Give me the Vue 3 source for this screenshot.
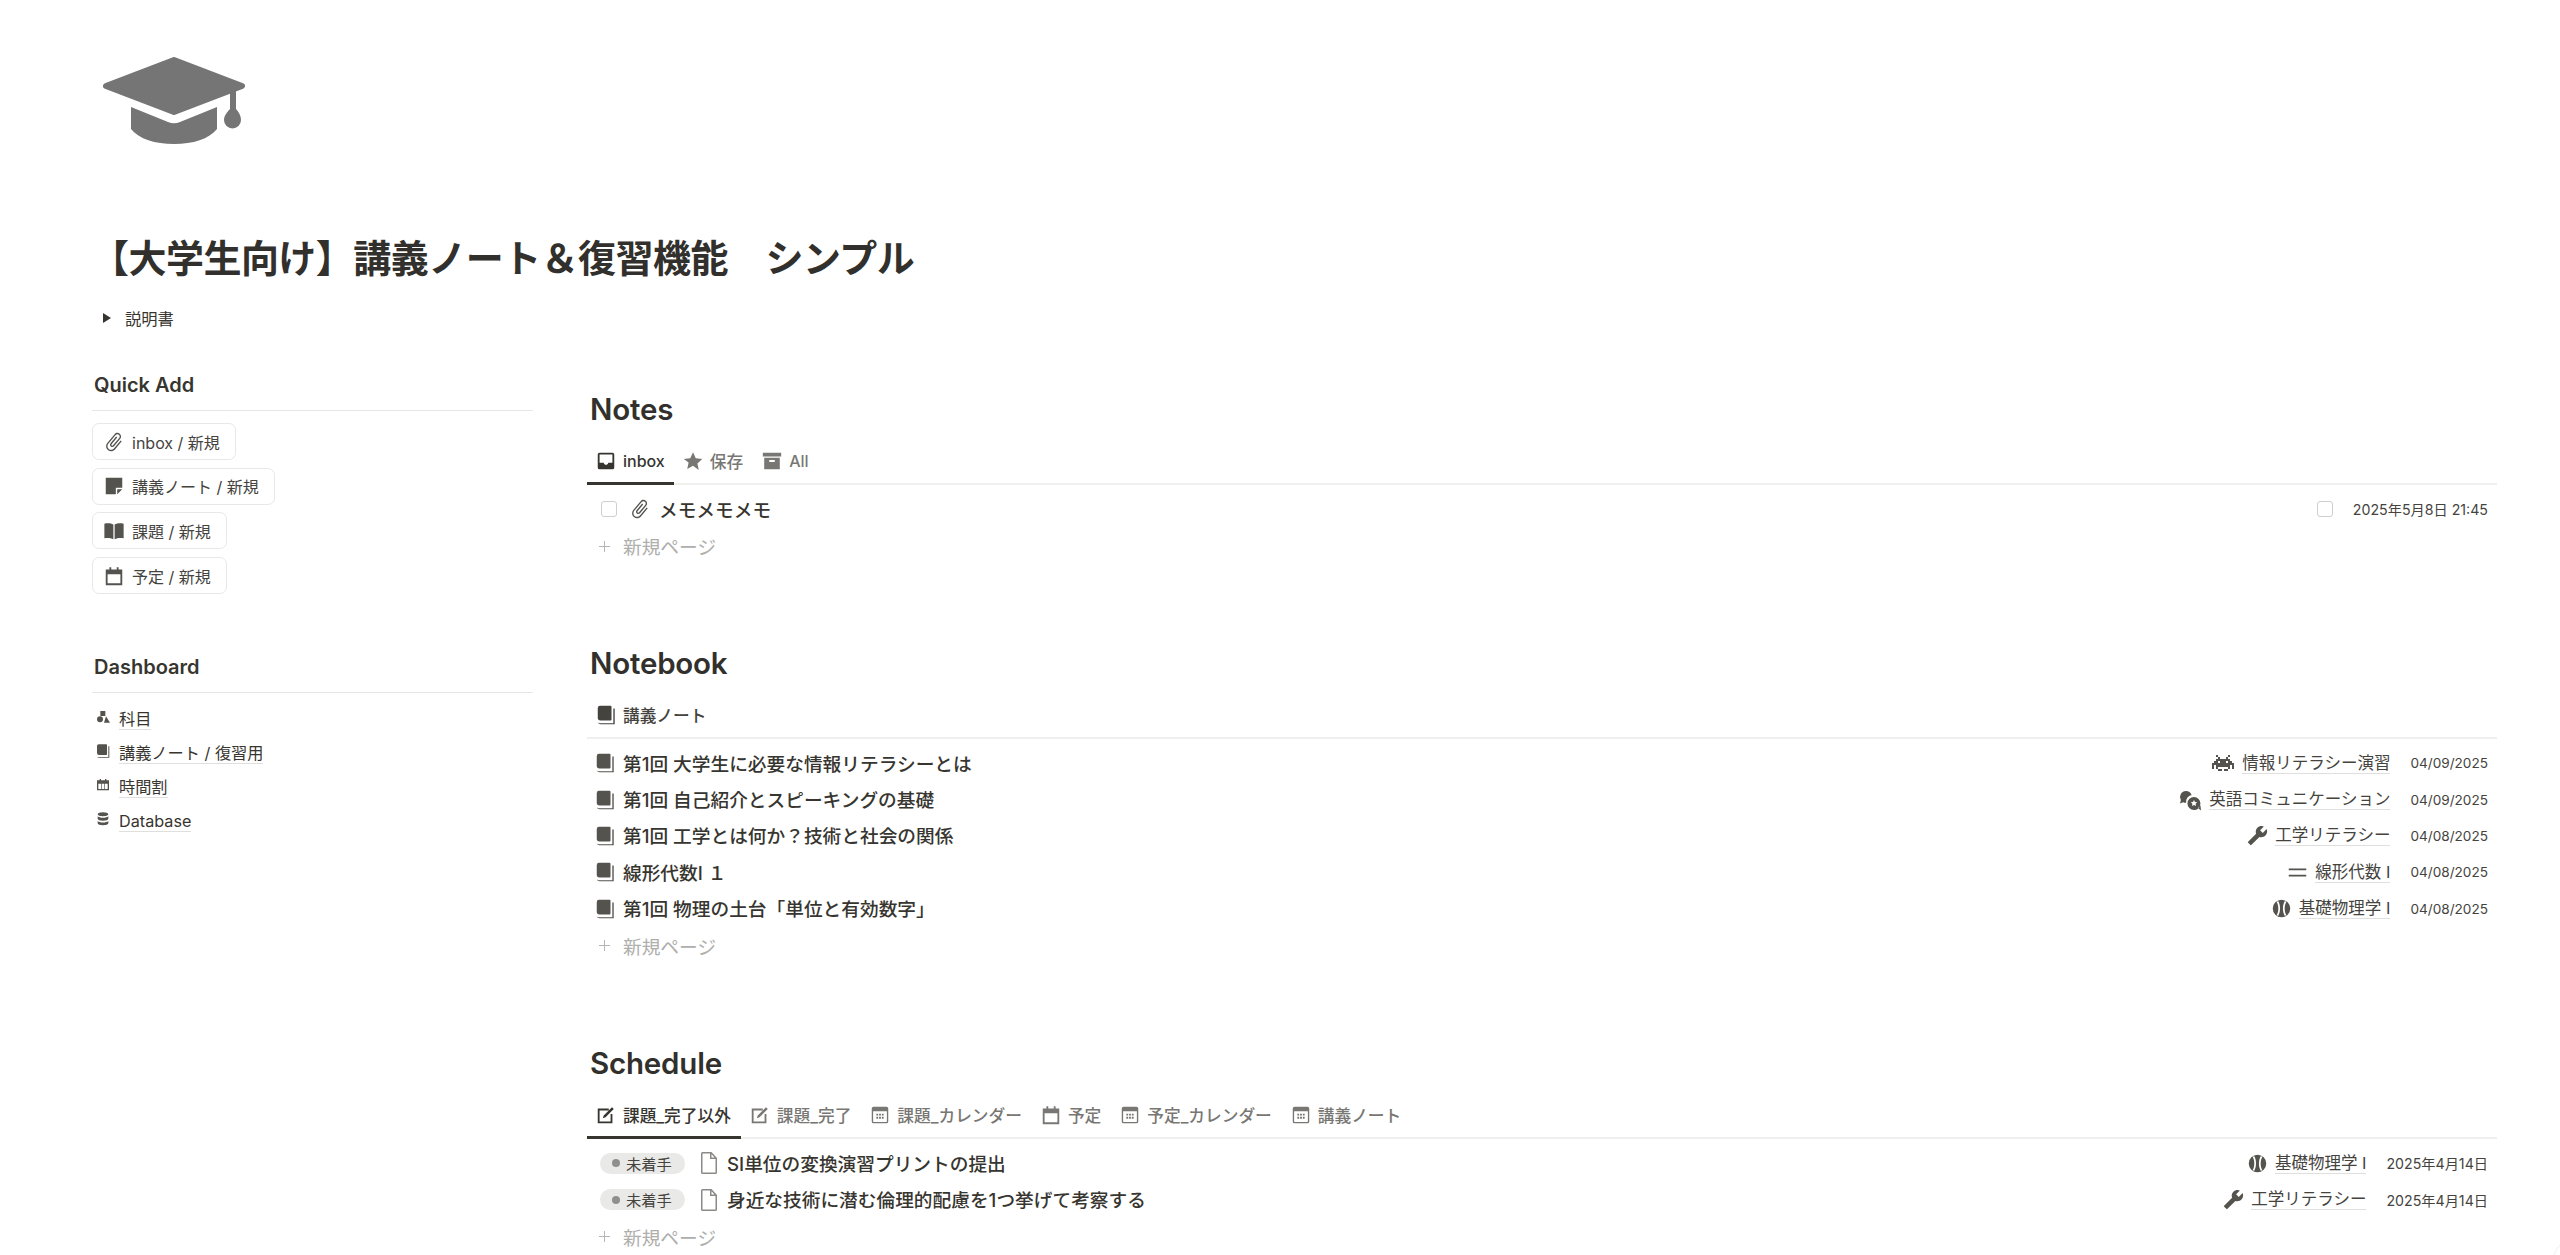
<script setup>
// pixel sprite for the little invader icon
const invader = [
  "..X.....X..",
  "...X...X...",
  "..XXXXXXX..",
  ".XX.XXX.XX.",
  "XXXXXXXXXXX",
  "X.XXXXXXX.X",
  "X.X.....X.X",
  "...XX.XX...",
]
  .flatMap((line, y) =>
    [...line].map((c, x) =>
      c === "X" ? `M${1 + x * 2} ${4 + y * 2}h2v2h-2z` : ""
    )
  )
  .join("");

const icons = {
  clip: "M16.5 6v11.5c0 2.21-1.79 4-4 4s-4-1.79-4-4V5c0-1.38 1.12-2.5 2.5-2.5s2.5 1.12 2.5 2.5v10.5c0 .55-.45 1-1 1s-1-.45-1-1V6H10v9.5c0 1.38 1.12 2.5 2.5 2.5s2.5-1.12 2.5-2.5V5c0-2.21-1.79-4-4-4S7 2.79 7 5v12.5c0 3.04 2.46 5.5 5.5 5.5s5.5-2.46 5.5-5.5V6h-1.5z",
  note: "M3 3h18v11h-7v7H3z M15.5 15.5H21L15.5 21z",
  book: "M1.5 4c3.2-.8 7-.8 9.8 1v16c-2.8-1.5-6.6-1.8-9.8-1z M22.5 4c-3.2-.8-7-.8-9.8 1v16c2.8-1.5 6.6-1.8 9.8-1z",
  cal: "M3 5h4V2.5h2V5h6V2.5h2V5h4v17H3z M5 10v10h14V10z",
  inbox: "M5 3h14a2 2 0 0 1 2 2v14a2 2 0 0 1-2 2H5a2 2 0 0 1-2-2V5a2 2 0 0 1 2-2z M5 5v9h4.5c.4 1.5 1.3 2.2 2.5 2.2s2.1-.7 2.5-2.2H19V5z",
  star: "M12 2.5l3 6.6 7.1.8-5.3 4.8 1.5 7L12 17.2l-6.3 3.5 1.5-7L1.9 9.9 9 9.1z",
  archive: "M2 3h20v4H2z M3.5 8.5h17V21h-17z M9 11v2h6v-2z",
  stack: "M3 4.5A2.5 2.5 0 0 1 5.5 2H17a1 1 0 0 1 1 1v14a1 1 0 0 1-1 1H6a3 3 0 0 1-3-3z M20 5h1.5v17H6a3.5 3.5 0 0 1-3-1.8c.8.5 1.6.8 3 .8h14z",
  shapes: "M3 15.5a4.5 4.5 0 1 0 9 0a4.5 4.5 0 1 0-9 0z M16.5 11l6 9.5h-9z M8 3h7.5v7.5H8z",
  grid: "M3 5h4V3h2v2h6V3h2v2h4v15H3z M5 10v8h4v-8z M10 10v8h4v-8z M15 10v8h4v-8z",
  db: "M4 5c0-1.7 3.6-3 8-3s8 1.3 8 3-3.6 3-8 3-8-1.3-8-3z M4 8c1.5 1.5 4.5 2.2 8 2.2S18.5 9.5 20 8v3.5c0 1.7-3.6 3-8 3s-8-1.3-8-3z M4 15c1.5 1.5 4.5 2.2 8 2.2s6.5-.7 8-2.2v3.5c0 1.7-3.6 3-8 3s-8-1.3-8-3z",
  invader,
  chat: "M8 3a6 6 0 0 1 5.6 3.9 7 7 0 0 0-5.5 7.9 6 6 0 0 1-2.9-.6L2 15.5l.9-3.4A6 6 0 0 1 8 3z M16 9a6.5 6.5 0 1 1-.1 13 6.5 6.5 0 0 1 .1-13z M16 12l1 2 2.2.3-1.6 1.5.4 2.2-2-1-2 1 .4-2.2-1.6-1.5 2.2-.3z M20 20l3 2.5-.5-5z",
  wrench: "M22.7 19l-9.1-9.1c.9-2.3.4-5-1.5-6.9-2-2-5-2.4-7.4-1.3L9 6 6 9 1.6 4.7C.4 7.1.9 10.1 2.9 12.1c1.9 1.9 4.6 2.4 6.9 1.5l9.1 9.1c.4.4 1 .4 1.4 0l2.3-2.3c.5-.4.5-1.1.1-1.4z",
  equals: "M2 7.5h20v2H2z M2 14.5h20v2H2z",
  ball: "M12 2a10 10 0 1 1 0 20 10 10 0 0 1 0-20z M6.5 4.5c2.5 4 2.5 11 0 15l1.6 1c3-4.5 3-12.5 0-17z M17.5 4.5c-2.5 4-2.5 11 0 15l-1.6 1c-3-4.5-3-12.5 0-17z",
  edit: "M3 5h12v2H5v12h12v-8h2v10H3z M9.5 12.5 18.5 3.5l2 2-9 9-3 1z",
  calview: "M5 3h14a2 2 0 0 1 2 2v14a2 2 0 0 1-2 2H5a2 2 0 0 1-2-2V5a2 2 0 0 1 2-2z M4.5 8v11c0 .3.2.5.5.5h14c.3 0 .5-.2.5-.5V8z M8 10.5h2v2H8z M11 10.5h2v2h-2z M14 10.5h2v2h-2z M8 14h2v2H8z M11 14h2v2h-2z M14 14h2v2h-2z",
  doc: "M5.5 1h9L20 7v14.5a1.5 1.5 0 0 1-1.5 1.5h-13A1.5 1.5 0 0 1 4 21.5v-19A1.5 1.5 0 0 1 5.5 1z M5.5 2.5v19h13V8H13V2.5z M14.5 3.2v3.3h3z",
};

const quickAdd = [
  { icon: "clip", label: "inbox / 新規", rot: true },
  { icon: "note", label: "講義ノート / 新規" },
  { icon: "book", label: "課題 / 新規" },
  { icon: "cal", label: "予定 / 新規" },
];

const dashboard = [
  { icon: "shapes", label: "科目" },
  { icon: "stack", label: "講義ノート / 復習用" },
  { icon: "grid", label: "時間割" },
  { icon: "db", label: "Database" },
];

const noteTabs = [
  { icon: "inbox", label: "inbox", active: true, en: true },
  { icon: "star", label: "保存" },
  { icon: "archive", label: "All", en: true },
];

const notebookRows = [
  { title: "第1回 大学生に必要な情報リテラシーとは", icon: "invader", subject: "情報リテラシー演習", date: "04/09/2025" },
  { title: "第1回 自己紹介とスピーキングの基礎", icon: "chat", subject: "英語コミュニケーション", date: "04/09/2025" },
  { title: "第1回 工学とは何か？技術と社会の関係", icon: "wrench", subject: "工学リテラシー", date: "04/08/2025", flip: true },
  { title: "線形代数Ⅰ １", icon: "equals", subject: "線形代数 Ⅰ", date: "04/08/2025" },
  { title: "第1回 物理の土台「単位と有効数字」", icon: "ball", subject: "基礎物理学 Ⅰ", date: "04/08/2025" },
];

const scheduleTabs = [
  { icon: "edit", label: "課題_完了以外", active: true },
  { icon: "edit", label: "課題_完了" },
  { icon: "calview", label: "課題_カレンダー" },
  { icon: "cal", label: "予定" },
  { icon: "calview", label: "予定_カレンダー" },
  { icon: "calview", label: "講義ノート" },
];

const scheduleRows = [
  { title: "SI単位の変換演習プリントの提出", icon: "ball", subject: "基礎物理学 Ⅰ", date: "2025年4月14日" },
  { title: "身近な技術に潜む倫理的配慮を1つ挙げて考察する", icon: "wrench", subject: "工学リテラシー", date: "2025年4月14日", flip: true },
];
</script>

<template>
  <div class="page">
    <header class="head">
      <svg class="hat" viewBox="0 0 142 87">
        <path d="M71 3 L139 29 L71 55 L3 29 Z" fill="#757575" stroke="#757575" stroke-width="6" stroke-linejoin="round" />
        <path d="M28 50 L65 65 Q71 67.5 77 65 L114 50 V72 C106 82 90 87 71 87 C52 87 36 82 28 72 Z" fill="#757575" />
        <path d="M127 36 L133 33.5 V52 C136 55 138 59 138 63 A8.5 8.5 0 0 1 121 63 C121 59 124 55 127 52 Z" fill="#757575" />
      </svg>
      <h1 class="title">【大学生向け】講義ノート＆復習機能　シンプル</h1>
      <div class="toggle">
        <span class="caret"></span>
        <span>説明書</span>
      </div>
    </header>

    <div class="cols">
      <aside class="side">
        <h3 class="side-title">Quick Add</h3>
        <div class="buttons">
          <div v-for="b in quickAdd" :key="b.label" class="btn">
            <svg :class="['ic', { rot: b.rot }]" viewBox="0 0 24 24"><path :d="icons[b.icon]" /></svg>
            <span>{{ b.label }}</span>
          </div>
        </div>

        <h3 class="side-title second">Dashboard</h3>
        <div class="links">
          <div v-for="l in dashboard" :key="l.label" class="link">
            <svg class="ic-small" viewBox="0 0 24 24"><path :d="icons[l.icon]" /></svg>
            <span class="under">{{ l.label }}</span>
          </div>
        </div>
      </aside>

      <main class="main">
        <section class="block">
          <h2 class="block-title">Notes</h2>
          <div class="tabs">
            <div v-for="t in noteTabs" :key="t.label" :class="['tab', { active: t.active, en: t.en }]">
              <svg class="ic" viewBox="0 0 24 24"><path :d="icons[t.icon]" /></svg>
              <span>{{ t.label }}</span>
            </div>
          </div>
          <div class="rows">
            <div class="row">
              <span class="check first"></span>
              <svg class="ic rot clip" viewBox="0 0 24 24"><path :d="icons.clip" /></svg>
              <span class="row-title">メモメモメモ</span>
              <span class="meta">
                <span class="check"></span>
                <span class="date">2025年5月8日 21:45</span>
              </span>
            </div>
            <div class="add"><span class="plus"></span><span class="add-label">新規ページ</span></div>
          </div>
        </section>

        <section class="block">
          <h2 class="block-title">Notebook</h2>
          <div class="tabs">
            <div class="tab plain">
              <svg class="ic" viewBox="0 0 24 24"><path :d="icons.stack" /></svg>
              <span>講義ノート</span>
            </div>
          </div>
          <div class="rows">
            <div v-for="r in notebookRows" :key="r.title" class="row">
              <svg class="ic" viewBox="0 0 24 24"><path :d="icons.stack" /></svg>
              <span class="row-title">{{ r.title }}</span>
              <span class="meta">
                <span class="subject">
                  <svg :class="['ic', r.icon, { flip: r.flip }]" viewBox="0 0 24 24"><path :d="icons[r.icon]" /></svg>
                  <span class="under">{{ r.subject }}</span>
                </span>
                <span class="date num">{{ r.date }}</span>
              </span>
            </div>
            <div class="add"><span class="plus"></span><span class="add-label">新規ページ</span></div>
          </div>
        </section>

        <section class="block">
          <h2 class="block-title">Schedule</h2>
          <div class="tabs">
            <div v-for="t in scheduleTabs" :key="t.label" :class="['tab', { active: t.active }]">
              <svg class="ic" viewBox="0 0 24 24"><path :d="icons[t.icon]" /></svg>
              <span>{{ t.label }}</span>
            </div>
          </div>
          <div class="rows">
            <div v-for="r in scheduleRows" :key="r.title" class="row">
              <span class="pill"><i class="dot"></i><span class="pill-text">未着手</span></span>
              <svg class="ic doc" viewBox="0 0 24 24"><path :d="icons.doc" /></svg>
              <span class="row-title">{{ r.title }}</span>
              <span class="meta">
                <span class="subject">
                  <svg :class="['ic', r.icon, { flip: r.flip }]" viewBox="0 0 24 24"><path :d="icons[r.icon]" /></svg>
                  <span class="under">{{ r.subject }}</span>
                </span>
                <span class="date">{{ r.date }}</span>
              </span>
            </div>
            <div class="add"><span class="plus"></span><span class="add-label">新規ページ</span></div>
          </div>
        </section>
      </main>
    </div>
    <div class="help"></div>
  </div>
</template>

<style>
html, body { margin: 0; background: #fff; overflow: hidden; }
</style>

<style scoped>
.page {
  width: 2560px;
  height: 1255px;
  box-sizing: border-box;
  padding: 57px 63px 0 92px;
  overflow: hidden;
  font-family: Inter, "Noto Sans CJK JP", sans-serif;
  color: #37352f;
  background: #fff;
}
svg { fill: currentColor; fill-rule: evenodd; flex-shrink: 0; display: block; }

.hat { width: 142px; height: 87px; margin-left: 11px; }
.title { margin: 90px 0 24px -1px; font-size: 38px; line-height: 48px; font-weight: 700; letter-spacing: -0.53px; color: #32302c; }
.toggle { display: flex; align-items: center; height: 24px; font-size: 16.3px; margin-bottom: 40px; }
.caret { width: 0; height: 0; margin: 0 14px 0 11px; border-left: 8px solid #37352f; border-top: 5px solid transparent; border-bottom: 5px solid transparent; }

.cols { display: flex; gap: 54px; }
.side { width: 441px; flex-shrink: 0; }
.main { flex: 1; min-width: 0; padding-top: 19px; }

.side-title { margin: 0; padding: 1px 0 11px 2px; font-size: 20px; line-height: 28px; font-weight: 600; border-bottom: 1px solid #e6e6e4; }
.side-title.second { margin-top: 58px; }

.buttons { display: flex; flex-direction: column; align-items: flex-start; gap: 7.7px; margin-top: 12px; }
.btn { display: flex; align-items: center; gap: 9px; height: 37px; box-sizing: border-box; padding: 0 15px 0 12px; border: 1.5px solid #e8e8e6; border-radius: 7px; font-size: 16px; color: #45433e; }
.btn .ic { color: #55534e; }

.links { margin-top: 9px; }
.link { display: flex; align-items: center; height: 34px; gap: 9px; padding-left: 4px; font-size: 16.2px; }
.ic-small { width: 16px; height: 16px; margin: 0 -1px 5px; color: #55534e; }
.under { border-bottom: 1px solid #dfdfdd; line-height: 20px; }

.block { height: 576px; }
.block:nth-child(1) { height: 254px; }
.block:nth-child(2) { height: 400px; }
.block-title { margin: 0; padding-left: 3px; font-size: 29.5px; line-height: 40px; font-weight: 600; letter-spacing: -0.2px; color: #32302c; }

.tabs { display: flex; height: 56px; box-sizing: border-box; align-items: flex-end; border-bottom: 2px solid #efefee; }
.tab { display: flex; align-items: center; gap: 8px; height: 43px; box-sizing: border-box; padding: 0 10px 3px; margin-bottom: -2px; font-size: 16.7px; font-weight: 500; color: #787774; border-bottom: 3px solid transparent; }
.tab.en { font-size: 16px; padding-right: 9px; }
.tab.active { color: #37352f; border-bottom-color: #37352f; }
.tab.plain { color: #45433e; }
.ic { width: 22px; height: 22px; margin: 0 -2px; color: #55534e; }
.tab .ic { color: inherit; }
.rot { transform: rotate(40deg); }
.flip { transform: scaleX(-1); }

.rows { padding-top: 6px; }
.row { display: flex; align-items: center; height: 36.4px; padding: 0 9px; gap: 9px; }
.row-title { padding-bottom: 2px; font-size: 18.7px; font-weight: 500; white-space: nowrap; }
.meta { margin-left: auto; display: flex; align-items: center; gap: 20px; }
.date { font-size: 14.2px; color: #45433e; white-space: nowrap; }
.date.num { font-size: 13.6px; }
.subject { display: flex; align-items: center; gap: 7px; font-size: 16.5px; color: #45433e; }
.subject .ic { width: 21px; height: 21px; margin: 0; }
.subject .invader, .subject .chat { width: 24px; height: 24px; }
.check { width: 16px; height: 16px; box-sizing: border-box; border: 1.5px solid #cfcfcc; border-radius: 3px; }
.check.first { margin-left: 5px; margin-right: 5px; }
.ic.clip { margin-right: -1px; }
.pill { display: flex; align-items: center; gap: 6px; width: 85px; height: 21px; box-sizing: border-box; padding-left: 12px; margin: 0 6px 0 4px; border-radius: 11px; background: #e9e9e7; font-size: 15.3px; color: #45433e; }
.pill-text { padding-bottom: 1px; }
.dot { width: 8px; height: 8px; border-radius: 50%; background: #8f8f8c; }
.ic.doc { width: 24px; height: 24px; margin: 0 -3px; color: #8b8a86; }

.add { display: flex; align-items: center; gap: 13px; height: 38px; padding-left: 12px; font-size: 18.7px; color: #aeaeac; }
.add-label { padding-bottom: 1px; }
.plus { width: 11px; height: 11px; background: linear-gradient(#b5b5b3, #b5b5b3) center / 100% 1px no-repeat, linear-gradient(#b5b5b3, #b5b5b3) center / 1px 100% no-repeat; }

.help { position: fixed; right: -38px; bottom: -28px; width: 45px; height: 45px; box-sizing: border-box; border: 1px solid #f0f0ef; border-radius: 50%; background: #fff; }
</style>
